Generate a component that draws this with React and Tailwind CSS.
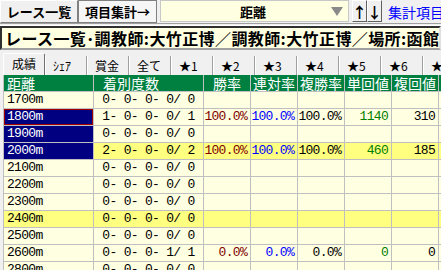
import React from 'react';

const rows = [
  { d: '1700m', c: '0- 0- 0- 0/ 0' },
  { d: '1800m', c: '1- 0- 0- 0/ 1', sel: true, focus: true, v: ['100.0%', '100.0%', '100.0%', '1140', '310'] },
  { d: '1900m', c: '0- 0- 0- 0/ 0', sel: true },
  { d: '2000m', c: '2- 0- 0- 0/ 2', sel: true, hl: true, v: ['100.0%', '100.0%', '100.0%', '460', '185'] },
  { d: '2100m', c: '0- 0- 0- 0/ 0' },
  { d: '2200m', c: '0- 0- 0- 0/ 0' },
  { d: '2300m', c: '0- 0- 0- 0/ 0' },
  { d: '2400m', c: '0- 0- 0- 0/ 0', hl: true },
  { d: '2500m', c: '0- 0- 0- 0/ 0' },
  { d: '2600m', c: '0- 0- 0- 1/ 1', v: ['0.0%', '0.0%', '0.0%', '0', '0'] },
  { d: '2800m', c: '0- 0- 0- 0/ 0' },
];

const valueColors = ['text-[#800000]', 'text-[#0000ff]', 'text-black', 'text-[#008000]', 'text-black'];
const tabs = ['ｼｪｱ', '賞金', '全て', '★1', '★2', '★3', '★4', '★5', '★6', '★'];
const heads = ['勝率', '連対率', '複勝率', '単回値', '複回値', ''];

const cell = 'h-[17px] border-r border-b border-[#c0c0c0] whitespace-pre';
const mono = "font-['Liberation_Mono','Noto_Sans_CJK_JP',monospace] text-[13px] tracking-[-0.7px] leading-[16px]";

export default function App() {
  return (
    <div className="w-[441px] h-[270px] overflow-hidden bg-[#f0f0f0] font-['Noto_Sans_CJK_JP',sans-serif] text-black">
      {/* top bar */}
      <div className="flex h-[23px] items-stretch whitespace-nowrap">
        <div className="w-[78px] shrink-0 flex items-center justify-center border border-t-white border-l-white border-b-[#808080] border-r-[#808080] text-[13px] font-bold leading-none">
          レース一覧
        </div>
        <div className="w-[79px] shrink-0 flex items-center justify-center border border-[#808080] bg-[#f6f6f6] text-[13px] font-bold leading-none">
          項目集計→
        </div>
        <div className="ml-[3px] w-[189px] shrink-0 h-[22px] flex items-center border border-[#c8c8c8] bg-[#ffffe1]">
          <div className="flex-1 text-center pl-[14px] text-[13px] font-bold leading-none">距離</div>
          <svg width="12" height="9" viewBox="0 0 12 9" className="mr-[5px]">
            <path d="M0 0 H12 L6 9 Z" fill="#8a8a8a" />
          </svg>
        </div>
        <div className="ml-[3px] w-[15px] shrink-0 h-[22px] flex items-center justify-center border border-t-white border-l-white border-b-[#606060] border-r-[#606060] text-[15px] font-bold leading-none">↑</div>
        <div className="w-[15px] shrink-0 h-[22px] flex items-center justify-center border border-t-white border-l-white border-b-[#606060] border-r-[#606060] text-[15px] font-bold leading-none">↓</div>
        <div className="ml-[6px] flex items-center text-[14px] text-[#0000ff] leading-none">集計項目メニュー</div>
      </div>

      {/* separator */}
      <div className="h-[3px] border-t border-[#a0a0a0] border-b border-b-white" />

      {/* title */}
      <div className="h-[24px] flex items-center pl-[3px] bg-[#ffffe1] border-2 border-t-[#303030] border-l-[#303030] border-b-[#a0a0a0] border-r-[#e0e0e0] text-[16px] tracking-[0.4px] font-bold leading-none whitespace-nowrap overflow-hidden">
        レース一覧･調教師:大竹正博／調教師:大竹正博／場所:函館
      </div>

      {/* tabs */}
      <div className="h-[25px] flex items-end pl-[3px] text-[12px] leading-none whitespace-nowrap overflow-hidden">
        <div className="w-[42px] shrink-0 h-[22px] flex items-center justify-center pb-[1px] border-t border-l border-white border-r border-r-[#707070] rounded-t-[2px] bg-[#f0f0f0]">
          成績
        </div>
        {tabs.map((t) => (
          <div
            key={t}
            className="w-[42px] shrink-0 h-[19px] flex items-center pl-[7px] border-l border-white border-r border-r-[#a0a0a0] bg-[#f0f0f0]"
          >
            {t}
          </div>
        ))}
      </div>

      {/* grid */}
      <div className="ml-[3px] border-l border-[#c0c0c0] grid grid-cols-[90px_110px_47px_47px_47px_47px_47px_47px]">
        <div className={`${cell} bg-[#008040] text-white text-[14px] leading-[16px] pl-[3px]`}>距離</div>
        <div className={`${cell} bg-[#008040] text-white text-[14px] leading-[16px] pl-[9px]`}>着別度数</div>
        {heads.map((h, i) => (
          <div key={i} className={`${cell} bg-[#008040] text-white text-[14px] leading-[16px] text-center`}>{h}</div>
        ))}

        {rows.map((r) => {
          const bg = r.hl ? 'bg-[#ffff80]' : 'bg-[#ffffe1]';
          const first = r.sel ? 'bg-[#000080] text-white' : bg;
          const focus = r.focus ? 'shadow-[inset_0_0_0_1px_#a00000]' : '';
          return (
            <React.Fragment key={r.d}>
              <div className={`${cell} ${mono} ${first} ${focus} pl-[3px]`}>{r.d}</div>
              <div className={`${cell} ${mono} ${bg} text-center`}>{r.c}</div>
              {[0, 1, 2, 3, 4, 5].map((i) => (
                <div key={i} className={`${cell} ${mono} ${bg} text-right pr-[3px] ${valueColors[i] || ''}`}>
                  {r.v && i < 5 ? r.v[i] : ''}
                </div>
              ))}
            </React.Fragment>
          );
        })}
      </div>
    </div>
  );
}
